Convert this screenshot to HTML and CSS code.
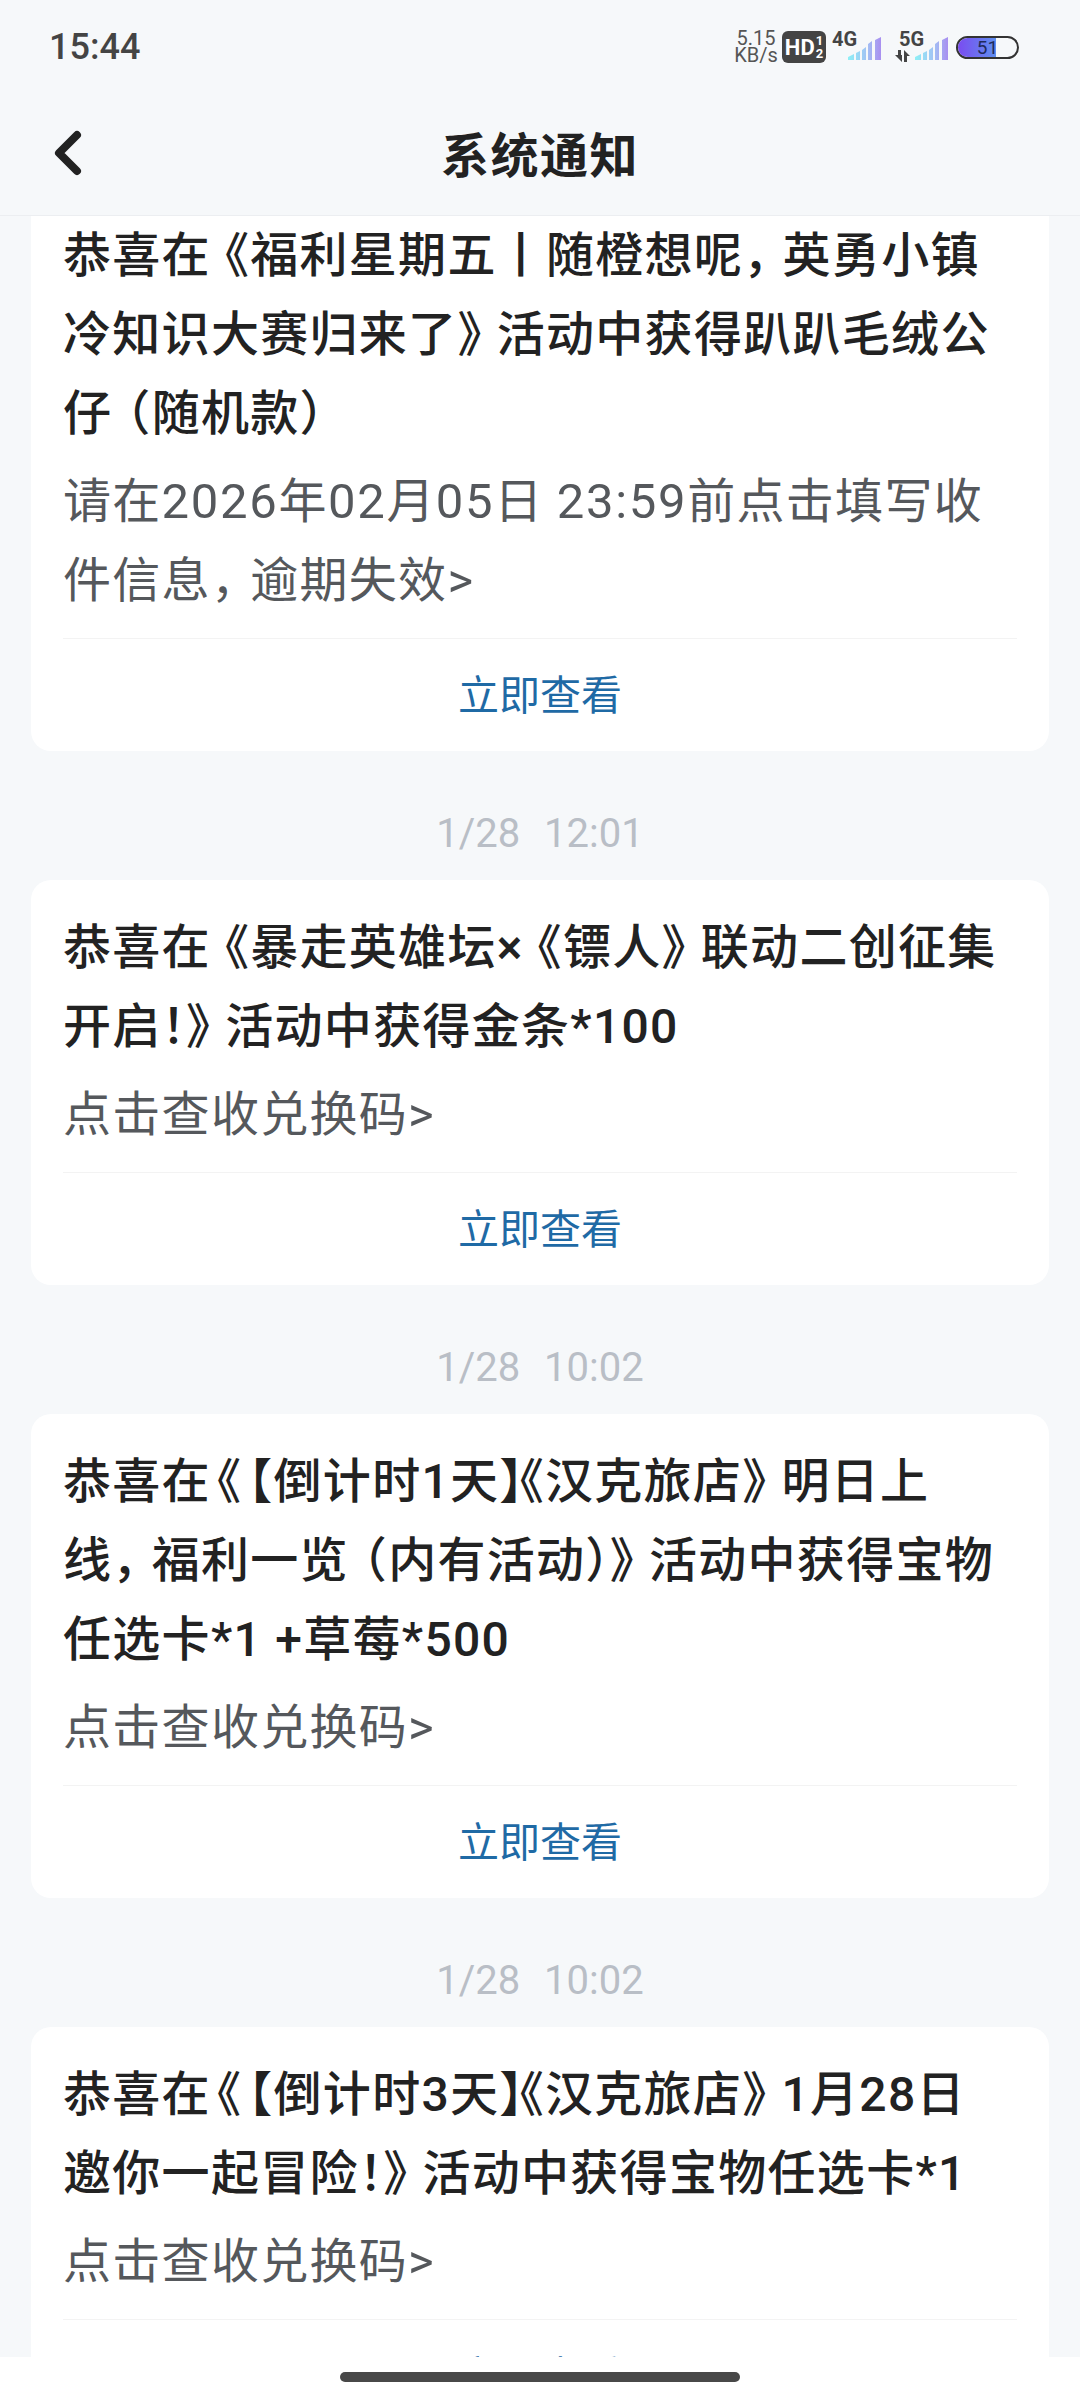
FILE: index.html
```html
<!DOCTYPE html>
<html lang="zh-CN">
<head>
    <meta charset="UTF-8">
    <meta name="viewport" content="width=device-width, initial-scale=1.0">
    <title>系统通知</title>
    <link rel="stylesheet" href="styles.css">
</head>
<body>
    <div class="phone">
        <header class="top">
            <div class="status">
                <span class="clock">15:44</span>
                <div class="status-icons">
                    <span class="speed">5.15<br>KB/s</span>
                    <span class="hd">HD<span class="hd-frac"><span>1</span><span>2</span></span></span>
                    <svg class="sig" width="50" height="38" viewBox="0 -4 50 38">
                        <defs>
                            <linearGradient id="barFade" x1="0" x2="1" y1="0" y2="0">
                                <stop offset="0" stop-color="#8ef0f6"/>
                                <stop offset="0.55" stop-color="#a2c4f4"/>
                                <stop offset="1" stop-color="#a98ff0"/>
                            </linearGradient>
                        </defs>
                        <text x="0" y="16" class="sig-text">4G</text>
                        <path fill="url(#barFade)" d="M16 27l6-3v6h-6zM24 23l4-2v9h-4zM30 20l4-3v13h-4zM36 14l4-3v19h-4zM43 10l6-3v23h-6z"/>
                    </svg>
                    <svg class="sig" width="56" height="38" viewBox="0 -4 56 38">
                        <text x="4" y="16" class="sig-text">5G</text>
                        <path fill="#444" d="M0 25h3v-5h3v5h1v7zM9 20l6 6h-3v6h-3z"/>
                        <path fill="url(#barFade)" d="M20 27l6-3v6h-6zM28 23l4-2v9h-4zM34 20l4-3v13h-4zM40 14l4-3v19h-4zM47 10l6-3v23h-6z"/>
                    </svg>
                    <span class="batt"><span class="batt-fill"></span><span class="batt-num">51</span></span>
                </div>
            </div>
            <nav class="navbar">
                <svg class="back" width="30" height="48" viewBox="0 0 30 48">
                    <path d="M24 6 6 24l18 18" fill="none" stroke="#222" stroke-width="8" stroke-linecap="round" stroke-linejoin="round"/>
                </svg>
                <h1>系统通知</h1>
            </nav>
        </header>

        <main class="list">
            <section class="card first">
                <p class="msg">恭喜在<span class="o">《</span>福利星期五丨随橙想呢<span class="c">，</span>英勇小镇<br>冷知识大赛归来了<span class="c">》</span>活动中获得趴趴毛绒公<br>仔<span class="o">（</span>随机款<span class="c">）</span></p>
                <p class="sub">请在<span class="num">2026</span>年<span class="num">02</span>月<span class="num">05</span>日 <span class="num">23:59</span>前点击填写收<br>件信息<span class="c">，</span>逾期失效<span class="num">&gt;</span></p>
                <div class="go">立即查看</div>
            </section>

            <div class="when">1/28&nbsp;&nbsp;12:01</div>
            <section class="card">
                <p class="msg">恭喜在<span class="o">《</span>暴走英雄坛×<span class="o">《</span>镖人<span class="c">》</span>联动二创征集<br>开启<span class="cc">！</span><span class="c">》</span>活动中获得金条*100</p>
                <p class="sub">点击查收兑换码<span class="num">&gt;</span></p>
                <div class="go">立即查看</div>
            </section>

            <div class="when">1/28&nbsp;&nbsp;10:02</div>
            <section class="card">
                <p class="msg">恭喜在<span class="oa">《</span><span class="oa">【</span>倒计时1天<span class="ca">】</span><span class="ob">《</span>汉克旅店<span class="c">》</span>明日上<br>线<span class="c">，</span>福利一览<span class="o">（</span>内有活动<span class="cc">）</span><span class="c">》</span>活动中获得宝物<br>任选卡*1 +草莓*500</p>
                <p class="sub">点击查收兑换码<span class="num">&gt;</span></p>
                <div class="go">立即查看</div>
            </section>

            <div class="when">1/28&nbsp;&nbsp;10:02</div>
            <section class="card">
                <p class="msg">恭喜在<span class="oa">《</span><span class="oa">【</span>倒计时3天<span class="ca">】</span><span class="ob">《</span>汉克旅店<span class="c">》</span>1月28日<br>邀你一起冒险<span class="cc">！</span><span class="c">》</span>活动中获得宝物任选卡*1</p>
                <p class="sub">点击查收兑换码<span class="num">&gt;</span></p>
                <div class="go">立即查看</div>
            </section>
        </main>

        <div class="home-bar"><span class="pill"></span></div>
    </div>
</body>
</html>
```

FILE: styles.css
```css
/* page */
* {
    box-sizing: border-box;
}
body {
    margin: 0;
    background-color: #f6f8fa;
    font-family: Roboto, "Noto Sans CJK SC", sans-serif;
}
.phone {
    width: 1080px;
    height: 2400px;
    display: flex;
    flex-direction: column;
    overflow: hidden;
}

/* status bar + title */
.top {
    flex: none;
    height: 216px;
    border-bottom: 1px solid #eceef1;
}
.status {
    height: 94px;
    padding: 0 61px 0 49px;
    display: flex;
    align-items: center;
    justify-content: space-between;
}
.clock {
    font-weight: 500;
    font-size: 36px;
    color: #444;
}
.status-icons {
    display: flex;
    align-items: center;
}
.speed {
    width: 46px;
    margin-right: 3px;
    font-size: 20px;
    line-height: 17px;
    color: #555;
    text-align: center;
}
.hd {
    width: 44px;
    height: 32px;
    margin-right: 6px;
    border-radius: 6px;
    background-color: #444;
    color: #fff;
    font-weight: 700;
    font-size: 22px;
    display: flex;
    align-items: center;
    justify-content: center;
}
.hd-frac {
    display: flex;
    flex-direction: column;
    margin-left: 1px;
    font-size: 13px;
    line-height: 13px;
}
.sig {
    margin-bottom: 4px;
}
.sig-text {
    font-weight: 700;
    font-size: 20px;
    fill: #444;
}
.sig + .sig {
    margin-left: 13px;
}
.batt {
    position: relative;
    width: 63px;
    height: 23px;
    margin-left: 5px;
    border: 2px solid #333;
    border-radius: 12px;
    display: block;
    overflow: hidden;
}
.batt-fill {
    display: block;
    width: 38px;
    height: 100%;
    background: linear-gradient(90deg, #7a4cf0, #5f8ff0);
}
.batt-num {
    position: absolute;
    top: 0;
    left: 0;
    width: 100%;
    text-align: center;
    font-size: 19px;
    line-height: 19px;
    color: #1f2a5c;
}
.navbar {
    position: relative;
    height: 121px;
    padding-bottom: 6px;
    display: flex;
    align-items: center;
    justify-content: center;
}
.navbar h1 {
    margin: 0;
    font-size: 48px;
    font-weight: 700;
    letter-spacing: 1.5px;
    color: #222;
}
.back {
    position: absolute;
    left: 53px;
    top: 35px;
}

/* message list */
.list {
    flex: 1;
    min-height: 0;
    overflow: hidden;
}
.card {
    margin: 0 31px;
    padding-top: 28px;
    background-color: #fff;
    border-radius: 20px;
}
.card.first {
    margin-top: -28px;
}
.msg, .sub {
    margin: 0 32px;
    font-size: 48px;
    line-height: 79px;
    letter-spacing: 1.3px;
    white-space: nowrap;
    text-spacing-trim: space-all;
}
.msg {
    font-weight: 500;
    color: #222;
}
.sub {
    margin-top: 9px;
    color: #55585c;
}
.num {
    font-size: 49px;
    letter-spacing: 1.7px;
}
/* punctuation is set narrower than a full cell */
.o {
    margin-left: -10px;
}
.oa {
    margin-left: -18px;
}
.ob {
    margin-left: -25px;
}
.c {
    margin-right: -10px;
}
.ca {
    margin-right: -28px;
}
.cc {
    margin-right: -25px;
}
.go {
    margin: 18px 32px 0;
    height: 113px;
    padding-bottom: 6px;
    border-top: 1px solid #f3f3f3;
    display: flex;
    align-items: center;
    justify-content: center;
    font-size: 41px;
    color: #1f6aa5;
}
.when {
    height: 129px;
    padding-top: 35px;
    display: flex;
    align-items: center;
    justify-content: center;
    font-size: 40px;
    word-spacing: 2px;
    color: #b9bec6;
}

/* gesture bar */
.home-bar {
    flex: none;
    height: 43px;
    background-color: #fff;
    padding-top: 15px;
    display: flex;
    justify-content: center;
}
.pill {
    width: 400px;
    height: 10px;
    border-radius: 5px;
    background-color: #484848;
}
```
